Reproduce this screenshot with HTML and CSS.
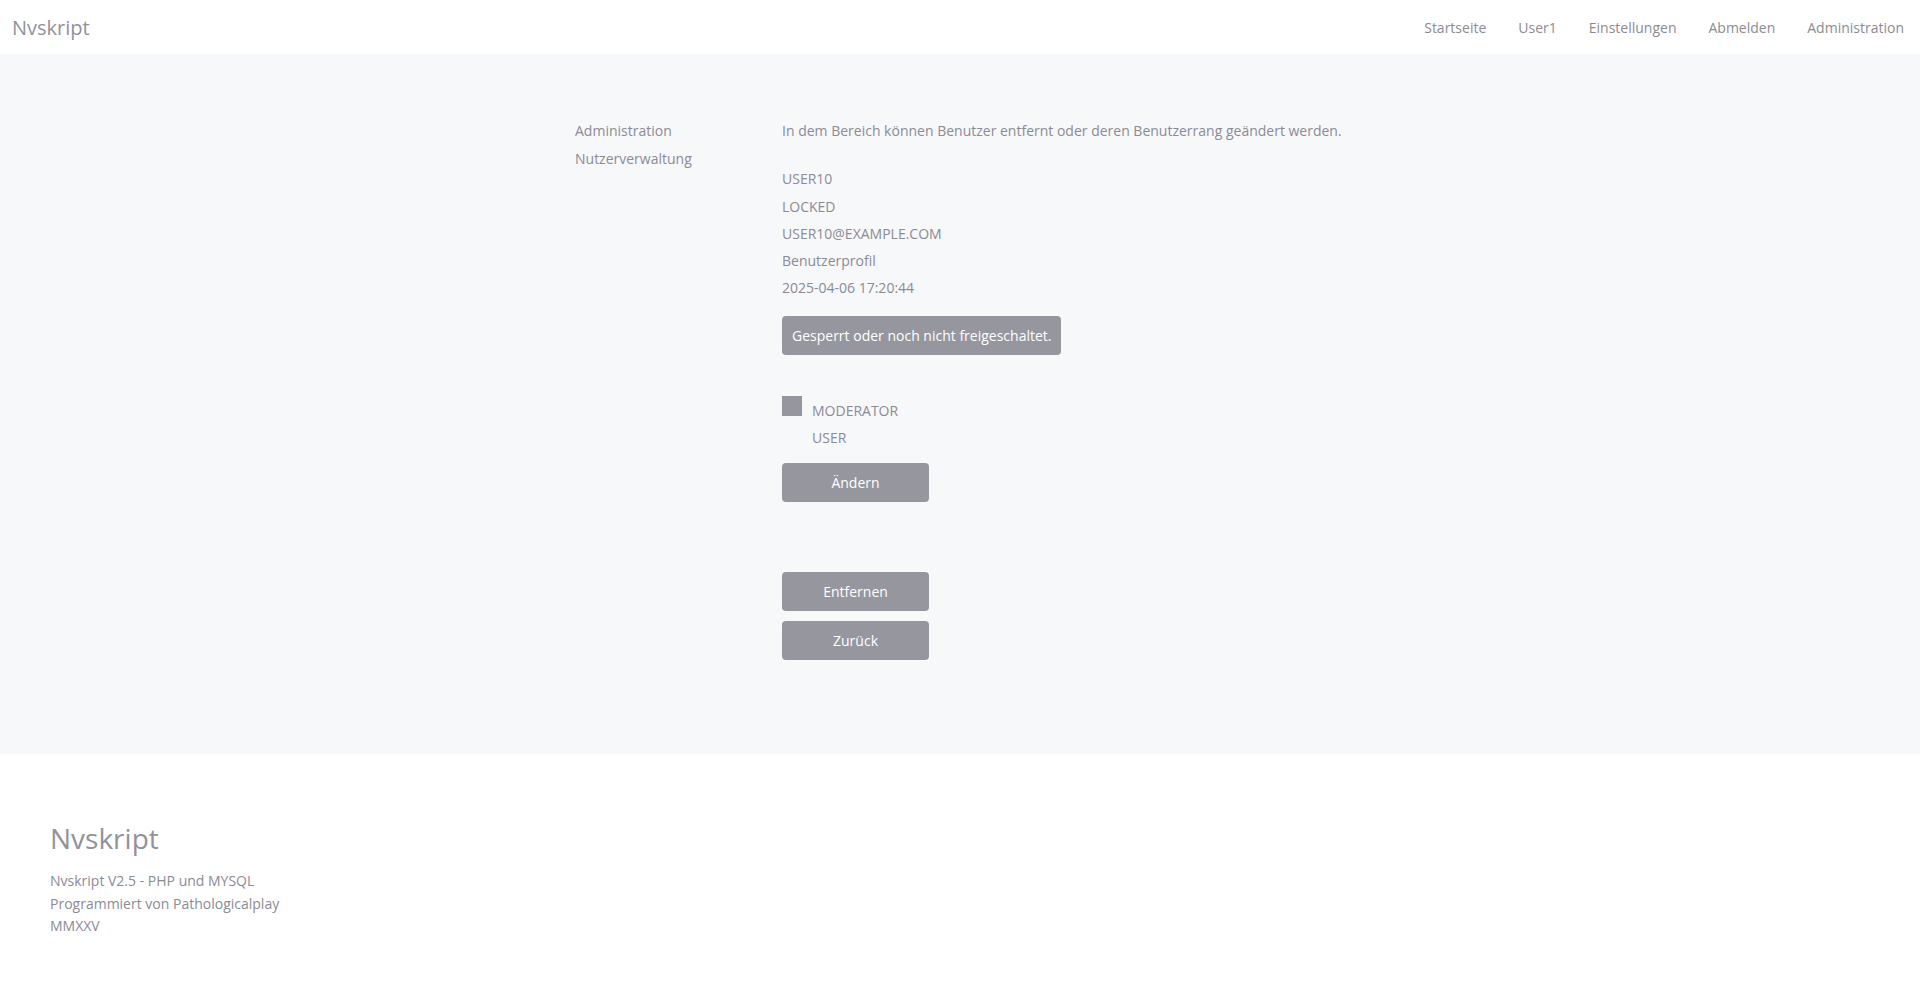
FILE: index.html
```html
<!DOCTYPE html>
<html lang="de">
<head>
<meta charset="UTF-8">
<meta name="viewport" content="width=device-width, initial-scale=1.0">
<title>Nvskript - Nutzerverwaltung</title>
<link rel="stylesheet" href="styles.css">
</head>
<body>

    <header class="topbar">
        <a class="brand" href="#">Nvskript</a>
        <nav class="nav">
            <a href="#">Startseite</a>
            <a href="#">User1</a>
            <a href="#">Einstellungen</a>
            <a href="#">Abmelden</a>
            <a href="#">Administration</a>
        </nav>
    </header>

    <main class="main">
        <div class="container">
            <aside class="sidebar">
                <a href="#">Administration</a>
                <a href="#">Nutzerverwaltung</a>
            </aside>

            <section class="content">
                <p class="intro">In dem Bereich können Benutzer entfernt oder deren Benutzerrang geändert werden.</p>

                <div class="details">
                    <div>USER10</div>
                    <div>LOCKED</div>
                    <div>USER10@EXAMPLE.COM</div>
                    <div>Benutzerprofil</div>
                    <div>2025-04-06 17:20:44</div>
                </div>

                <div class="status">Gesperrt oder noch nicht freigeschaltet.</div>

                <form class="roles">
                    <div class="role-row">
                        <span class="check"></span>
                        <div class="role-list">
                            <div>MODERATOR</div>
                            <div>USER</div>
                        </div>
                    </div>
                    <button type="submit" class="btn">Ändern</button>
                </form>

                <div class="actions">
                    <button class="btn">Entfernen</button>
                    <button class="btn">Zurück</button>
                </div>
            </section>
        </div>
    </main>

    <footer class="footer">
        <h2>Nvskript</h2>
        <p>Nvskript V2.5 - PHP und MYSQL</p>
        <p>Programmiert von Pathologicalplay</p>
        <p>MMXXV</p>
    </footer>

</body>
</html>
```

FILE: styles.css
```css
body {
    font-family: "Open Sans", "Liberation Sans", sans-serif;
    font-size: 14px;
    color: #8b8b95;
    margin: 0;
    padding: 0;
    background-color: #fff;
}
a {
    color: #8b8b95;
    text-decoration: none;
}
.topbar {
    height: 54px;
    display: flex;
    align-items: center;
    justify-content: space-between;
    padding: 0 16px 0 12px;
    background-color: #fff;
}
.brand {
    font-size: 20px;
    color: #92929c;
}
.nav {
    display: flex;
    gap: 32px;
}
.main {
    background-color: #f7f8fa;
    padding: 63px 0 94px;
}
.container {
    width: 770px;
    margin: 0 auto;
    display: grid;
    grid-template-columns: 207px 1fr;
}
.sidebar {
    display: flex;
    flex-direction: column;
    line-height: 28px;
}
.content {
    line-height: 27.3px;
}
.intro {
    margin: 0 0 21px;
}
.details {
    margin-bottom: 14px;
}
.status {
    display: inline-block;
    background-color: #96969e;
    color: #fff;
    padding: 6px 10px;
    line-height: 27px;
    border-radius: 4px;
}
.roles {
    margin-top: 41px;
}
.role-row {
    display: flex;
    gap: 10px;
}
.check {
    width: 20px;
    height: 20px;
    background-color: #96969e;
}
.role-list {
    padding-top: 1px;
}
.btn {
    display: block;
    width: 147px;
    height: 39px;
    font-family: inherit;
    font-size: 14px;
    background-color: #96969e;
    color: #fff;
    border: none;
    border-radius: 4px;
    cursor: pointer;
}
.roles .btn {
    margin-top: 12px;
}
.actions {
    margin-top: 70px;
    display: flex;
    flex-direction: column;
    gap: 10px;
}
.footer {
    padding: 65px 50px 40px;
    background-color: #fff;
}
.footer h2 {
    font-size: 28px;
    font-weight: normal;
    line-height: 38px;
    margin: 0 0 13px;
    color: #92929c;
}
.footer p {
    margin: 0;
    line-height: 22.5px;
}
```
